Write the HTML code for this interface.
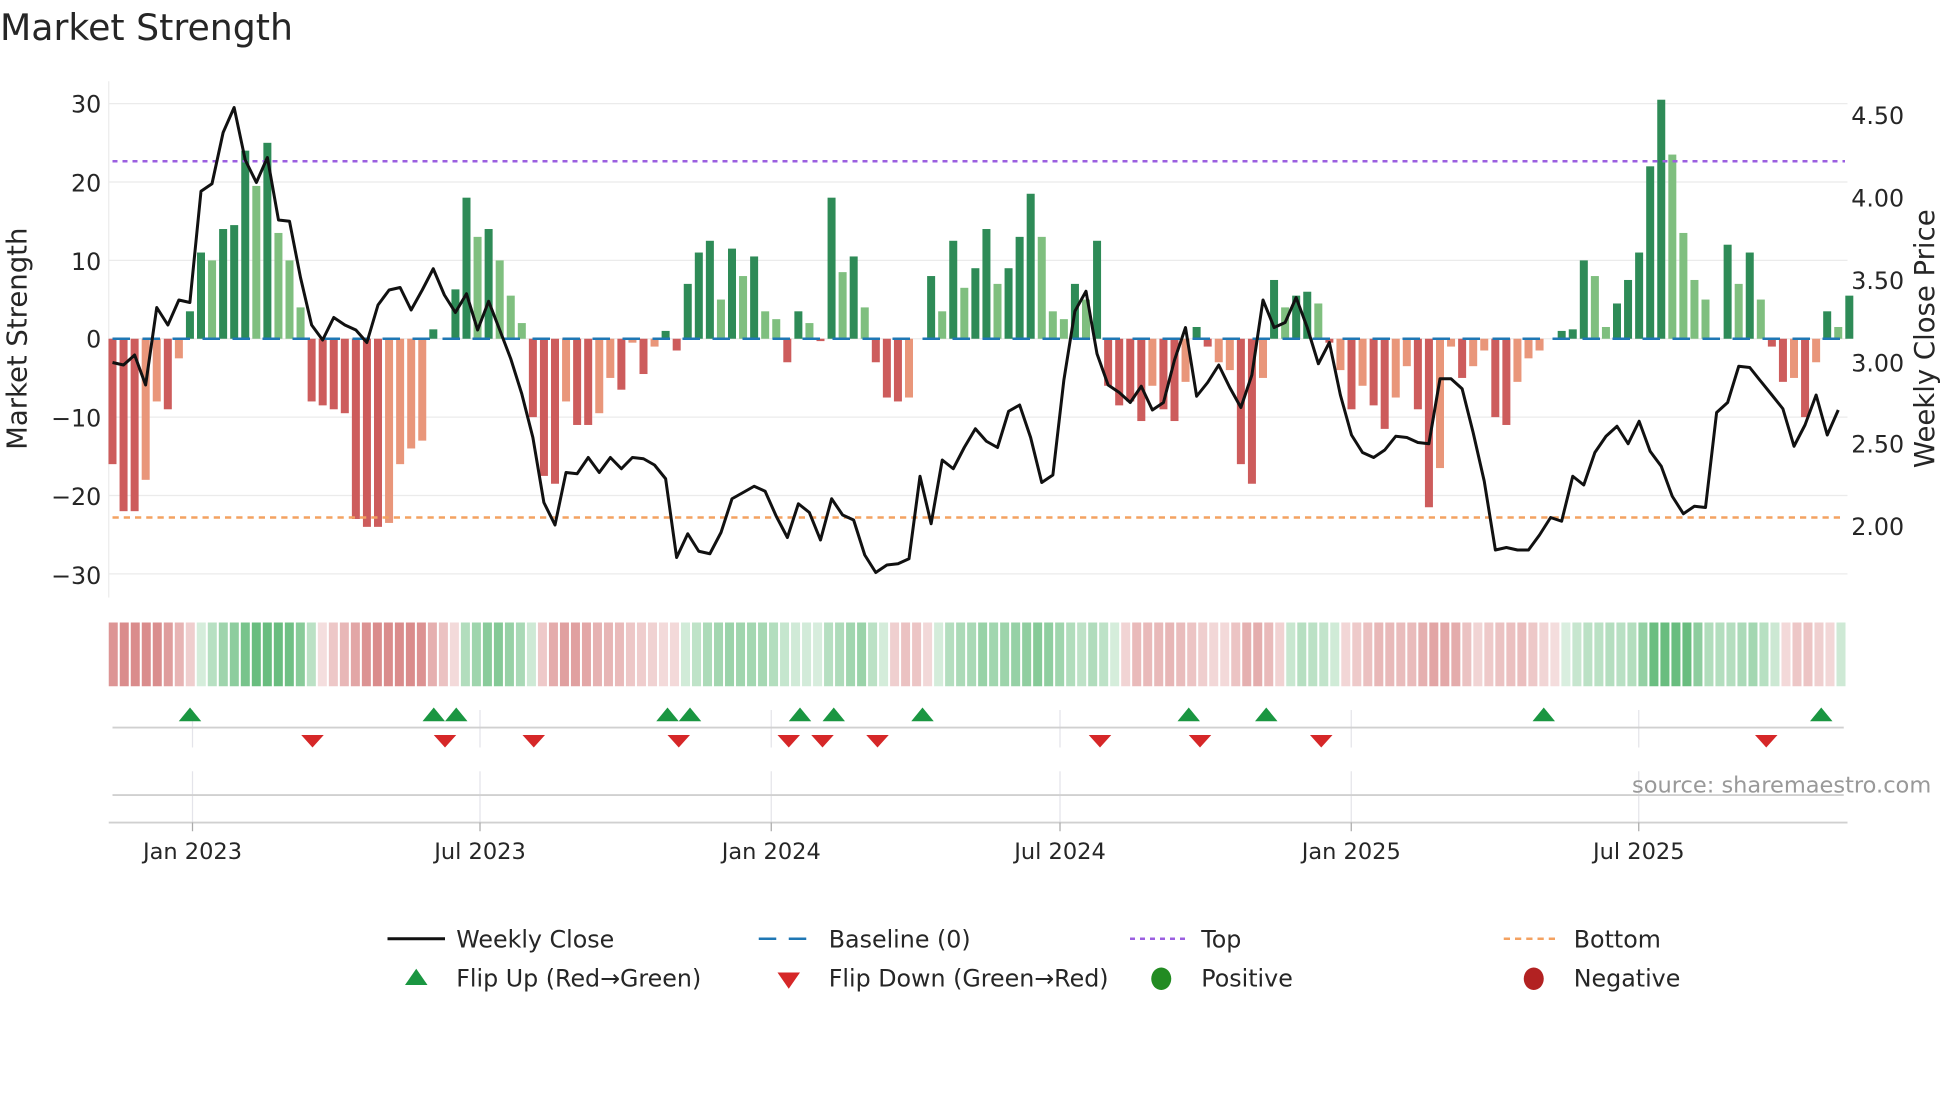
<!DOCTYPE html>
<html><head><meta charset="utf-8"><style>
html,body{margin:0;padding:0;background:#fff}
svg{display:block}
text{font-family:"DejaVu Sans","Liberation Sans",sans-serif;fill:#262626}
</style></head><body>
<svg id="s" width="1960" height="1102" viewBox="0 0 1568 881.6" xmlns="http://www.w3.org/2000/svg">
<rect width="1568" height="882" fill="#fff"/>
<text x="0" y="32" font-size="29">Market Strength</text>
<g id="grid" stroke="#ebebeb" stroke-width="1"></g>
<line x1="87" y1="65" x2="87" y2="478" stroke="#ebebeb"/>
<g id="bars"></g>
<line x1="90" y1="129" x2="1476" y2="129" stroke="#9b5fe0" stroke-width="2" stroke-dasharray="4,4"/>
<line x1="90" y1="414" x2="1476" y2="414" stroke="#f4a261" stroke-width="2" stroke-dasharray="5,4"/>
<line x1="90" y1="271" x2="1476" y2="271" stroke="#1f77b4" stroke-width="2" stroke-dasharray="14,10"/>
<polyline id="price" fill="none" stroke="#111" stroke-width="2.4" stroke-linejoin="round"/>
<g id="heat"></g>
<g stroke="#e4e4ea" stroke-width="1">
<line x1="154" y1="568" x2="154" y2="598"/><line x1="384" y1="568" x2="384" y2="598"/><line x1="617" y1="568" x2="617" y2="598"/><line x1="848" y1="568" x2="848" y2="598"/><line x1="1081" y1="568" x2="1081" y2="598"/><line x1="1311" y1="568" x2="1311" y2="598"/>
<line x1="154" y1="617" x2="154" y2="658"/><line x1="384" y1="617" x2="384" y2="658"/><line x1="617" y1="617" x2="617" y2="658"/><line x1="848" y1="617" x2="848" y2="658"/><line x1="1081" y1="617" x2="1081" y2="658"/><line x1="1311" y1="617" x2="1311" y2="658"/>
</g>
<line x1="90" y1="582" x2="1475" y2="582" stroke="#d0d0d0" stroke-width="1.5"/>
<line x1="90" y1="636" x2="1475" y2="636" stroke="#d0d0d0" stroke-width="1.5"/>
<line x1="87" y1="658" x2="1478" y2="658" stroke="#d0d0d0" stroke-width="1.5"/>
<g stroke="#aaa" stroke-width="1"><line x1="154" y1="658" x2="154" y2="665"/><line x1="384" y1="658" x2="384" y2="665"/><line x1="617" y1="658" x2="617" y2="665"/><line x1="848" y1="658" x2="848" y2="665"/><line x1="1081" y1="658" x2="1081" y2="665"/><line x1="1311" y1="658" x2="1311" y2="665"/></g>
<g id="marks"></g>
<g font-size="18" text-anchor="middle">
<text x="154" y="687">Jan 2023</text><text x="384" y="687">Jul 2023</text><text x="617" y="687">Jan 2024</text><text x="848" y="687">Jul 2024</text><text x="1081" y="687">Jan 2025</text><text x="1311" y="687">Jul 2025</text>
</g>
<g font-size="19" text-anchor="end">
<text x="81" y="90">30</text><text x="81" y="153">20</text><text x="81" y="216">10</text><text x="81" y="278">0</text><text x="81" y="341">−10</text><text x="81" y="404">−20</text><text x="81" y="467">−30</text>
</g>
<g font-size="19">
<text x="1481" y="99">4.50</text><text x="1481" y="165">4.00</text><text x="1481" y="231">3.50</text><text x="1481" y="297">3.00</text><text x="1481" y="362">2.50</text><text x="1481" y="428">2.00</text>
</g>
<text transform="translate(21,271) rotate(-90)" font-size="22" text-anchor="middle">Market Strength</text>
<text transform="translate(1547,271) rotate(-90)" font-size="22" text-anchor="middle">Weekly Close Price</text>
<text x="1545" y="634" font-size="18" text-anchor="end" style="fill:#999">source: sharemaestro.com</text>
<g font-size="19">
<line x1="310" y1="751" x2="356" y2="751" stroke="#111" stroke-width="2.4"/><text x="365" y="758">Weekly Close</text>
<line x1="607" y1="751" x2="652" y2="751" stroke="#1f77b4" stroke-width="2" stroke-dasharray="14,10"/><text x="663" y="758">Baseline (0)</text>
<line x1="904" y1="751" x2="949" y2="751" stroke="#9b5fe0" stroke-width="2" stroke-dasharray="4,4"/><text x="961" y="758">Top</text>
<line x1="1203" y1="751" x2="1248" y2="751" stroke="#f4a261" stroke-width="2" stroke-dasharray="5,4"/><text x="1259" y="758">Bottom</text>
<polygon points="324,788 342,788 333,775" fill="#1a9641"/><text x="365" y="789">Flip Up (Red→Green)</text>
<polygon points="622,778 640,778 631,791" fill="#d62728"/><text x="663" y="789">Flip Down (Green→Red)</text>
<ellipse cx="929" cy="783" rx="8" ry="9" fill="#228b22"/><text x="961" y="789">Positive</text>
<ellipse cx="1227" cy="783" rx="8" ry="9" fill="#b22222"/><text x="1259" y="789">Negative</text>
</g>
</svg>
<script>
var NS="http://www.w3.org/2000/svg";
function el(p,t,a){var e=document.createElementNS(NS,t);for(var k in a)e.setAttribute(k,a[k]);p.appendChild(e);return e;}
var g=document.getElementById("grid");
[30,20,10,0,-10,-20,-30].forEach(function(v){var y=271-v*6.27;el(g,"line",{x1:87,y1:y,x2:1478,y2:y});});
var d="-16R -22R -22R -18S -8S -9R -2.5S 3.5D 11D 10L 14D 14.5D 24D 19.5L 25D 13.5L 10L 4L -8R -8.5R -9R -9.5R -23R -24R -24R -23.5S -16S -14S -13S 1.2D 0N 6.3D 18D 13L 14D 10L 5.5L 2L -10R -17.5R -18.5R -8S -11R -11R -9.5S -5S -6.5R -0.5S -4.5R -1S 1D -1.5R 7D 11D 12.5D 5L 11.5D 8L 10.5D 3.5L 2.5L -3R 3.5D 2L -0.3R 18D 8.5L 10.5D 4L -3R -7.5R -8R -7.5S 0N 8D 3.5L 12.5D 6.5L 9D 14D 7L 9D 13D 18.5D 13L 3.5L 2.5L 7D 5L 12.5D -6R -8.5R -8R -10.5R -6S -9R -10.5R -5.5S 1.5D -1R -3S -4S -16R -18.5R -5S 7.5D 4L 5.5D 6D 4.5L -0.5R -4S -9R -6S -8.5R -11.5R -7.5S -3.5S -9R -21.5R -16.5S -1S -5R -3.5S -1.5S -10R -11R -5.5S -2.5S -1.5S 0N 1D 1.2D 10D 8L 1.5L 4.5D 7.5D 11D 22D 30.5D 23.5L 13.5L 7.5L 5L 0N 12D 7L 11D 5L -1R -5.5R -5S -10R -3S 3.5D 1.5L 5.5D".split(" ");
var col={D:"#2e8b57",L:"#7fbf7f",R:"#cd5c5c",S:"#e9967a",N:"#ccc"};
var b=document.getElementById("bars"),h=document.getElementById("heat");
var vals=[];
d.forEach(function(s,i){var v=parseFloat(s),t=s.slice(-1);vals.push(v);var x=90+8.85*i-3.2;
 var y1=271,y2=271-v*6.27;if(v!=0)el(b,"rect",{x:x,y:Math.min(y1,y2),width:6.4,height:Math.abs(y2-y1),fill:col[t]});});
var n0=vals.length,step=(1478-87)/n0;
vals.forEach(function(v,i){var a=0,n=0;for(var j=Math.max(0,i-3);j<=i;j++){a+=vals[j];n++;}a/=n;
 var m=Math.min(1,Math.abs(a)/18);var c;
 if(a>=0){c="rgba(50,165,80,"+(0.18+0.55*m)+")";}else{c="rgba(200,85,85,"+(0.18+0.5*m)+")";}
 el(h,"rect",{x:87+step*i,y:498,width:step-1.6,height:51,fill:c});});
var py="290 292 284 308 246 260 240 242 153 147 106 86 128 146 126 176 177 222 260 272 254 260 264 274 244 232 230 248 232 215 236 250 235 264 241 264 287 315 350 402 420 378 379 366 378 366 375 366 367 372 383 446 427 441 443 426 399 394 389 393 413 430 403 410 432 399 412 416 444 458 452 451 447 381 419 368 375 358 343 353 358 329 324 350 386 380 304 249 233 283 308 314 322 309 328 322 288 262 317 306 292 310 326 300 240 262 258 238 262 291 274 316 348 362 366 360 349 350 354 355 303 303 311 346 385 440 438 440 440 428 414 417 381 388 362 349 341 355 337 361 373 397 411 405 406 330 322 293 294 305 316 327 357 340 316 348 328".split(" ");
document.getElementById("price").setAttribute("points",py.map(function(y,i){return (90+8.85*i).toFixed(1)+","+y;}).join(" "));
var mk=document.getElementById("marks");
[152,347,365,534,552,640,667,738,951,1013,1235,1457].forEach(function(x){el(mk,"polygon",{points:(x-9)+",577 "+(x+9)+",577 "+x+",566",fill:"#1a9641"});});
[250,356,427,543,631,658,702,880,960,1057,1413].forEach(function(x){el(mk,"polygon",{points:(x-9)+",588 "+(x+9)+",588 "+x+",598",fill:"#d62728"});});
</script>
</body></html>
